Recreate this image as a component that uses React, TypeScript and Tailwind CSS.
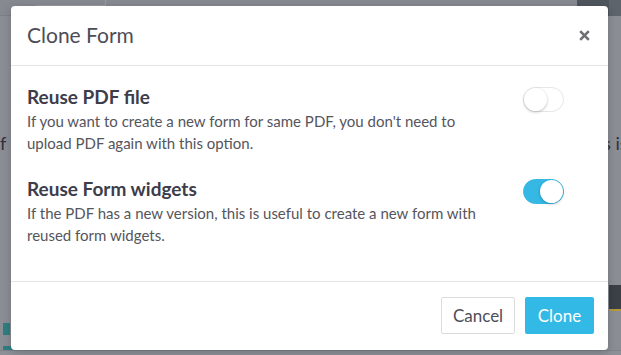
import { useState } from 'react';

function Toggle({ on, onChange }: { on: boolean; onChange: () => void }) {
  return (
    <button
      onClick={onChange}
      className={`relative w-[41px] h-[25px] rounded-full border transition-colors ${
        on ? 'bg-[#35b8e4] border-[#35b8e4]' : 'bg-white border-[#e6e6e6]'
      }`}
    >
      <span
        className={`absolute top-0 w-[23px] h-[23px] rounded-full bg-white shadow-[0_1px_3px_rgba(0,0,0,0.25)] ${
          on ? 'right-0' : 'left-0'
        }`}
      ></span>
    </button>
  );
}

function Option({
  title,
  text,
  on,
  onChange,
}: {
  title: string;
  text: string;
  on: boolean;
  onChange: () => void;
}) {
  return (
    <div className="flex items-start">
      <div className="w-[462px]">
        <h3 className="text-[19px] leading-[24px] font-bold text-[#3d3d4b]">{title}</h3>
        <p className="text-[15px] leading-[22px] text-[#55555c] mt-[1px]">{text}</p>
      </div>
      <div className="pl-[34px] pt-[2px]">
        <Toggle on={on} onChange={onChange} />
      </div>
    </div>
  );
}

export default function App() {
  const [reusePdf, setReusePdf] = useState(false);
  const [reuseWidgets, setReuseWidgets] = useState(true);

  return (
    <div
      className="relative w-[621px] h-[355px] overflow-hidden bg-[#8a8d94]"
      style={{ fontFamily: "Lato, 'Open Sans', sans-serif" }}
    >
      {/* page underneath the backdrop */}
      <div className="absolute inset-0">
        <div className="absolute top-0 left-0 right-0 h-[16px] bg-[#868990] border-b border-[#7c7f86]"></div>
        <div className="absolute top-0 left-[36px] w-[70px] h-[6px] border-b border-r border-[#9a9ca2]"></div>
        <div className="absolute top-0 right-[12px] w-[32px] h-[16px] bg-[#4f555c]"></div>
        <div className="absolute top-0 right-0 w-[12px] h-[16px] bg-[#5e646b]"></div>
        <div className="absolute top-[130px] left-[603px] whitespace-nowrap text-[18px] text-[#2f3138]">s is</div>
        <div className="absolute top-[130px] left-0 text-[18px] text-[#2f3138]">f</div>
        <div className="absolute top-[285px] right-0 w-[12px] h-[26px] bg-[#3b3f46] border-b-2 border-[#b59a3a]"></div>
        <div className="absolute top-[323px] left-[3px] w-[7px] h-[12px] bg-[#2f7d80]"></div>
        <div className="absolute top-[346px] left-[3px] w-[30px] h-[9px] bg-[#2f7d80]"></div>
        <div className="absolute bottom-0 left-0 right-0 h-[5px] bg-[#8d9097] border-t border-[#7f8289]"></div>
      </div>

      <div className="relative pt-[6px] pl-[11px]">
        <div className="w-[597px] h-[344px] bg-white rounded-[4px] shadow-[0_2px_8px_rgba(0,0,0,0.2)] flex flex-col">
          <div className="h-[60px] flex items-center justify-between pl-[16px] pr-[16px] border-b border-[#e5e5e5]">
            <h2 className="text-[21px] text-[#4d4d57] mt-[-2px]">Clone Form</h2>
            <button className="w-[14px] h-[14px] flex items-center justify-center mr-[1px] mt-[-1px]">
              <svg width="11" height="11" viewBox="0 0 11 11">
                <path d="M1.2 1.2 L9.8 9.8 M9.8 1.2 L1.2 9.8" stroke="#6f6f72" strokeWidth="2.6" />
              </svg>
            </button>
          </div>

          <div className="flex-1 pl-[16px] pt-[19px] flex flex-col gap-[23px]">
            <Option
              title="Reuse PDF file"
              text="If you want to create a new form for same PDF, you don't need to upload PDF again with this option."
              on={reusePdf}
              onChange={() => setReusePdf(!reusePdf)}
            />
            <Option
              title="Reuse Form widgets"
              text="If the PDF has a new version, this is useful to create a new form with reused form widgets."
              on={reuseWidgets}
              onChange={() => setReuseWidgets(!reuseWidgets)}
            />
          </div>

          <div className="border-t border-[#e5e5e5] pt-[15px] pb-[16px] pr-[14px] flex justify-end gap-[10px]">
            <button className="w-[74px] h-[37px] rounded-[2px] border border-[#dcdcdc] bg-white text-[17px] text-[#4d4d57]">
              Cancel
            </button>
            <button className="w-[69px] h-[37px] rounded-[2px] bg-[#33b9e5] text-[17px] text-white">
              Clone
            </button>
          </div>
        </div>
      </div>
    </div>
  );
}
